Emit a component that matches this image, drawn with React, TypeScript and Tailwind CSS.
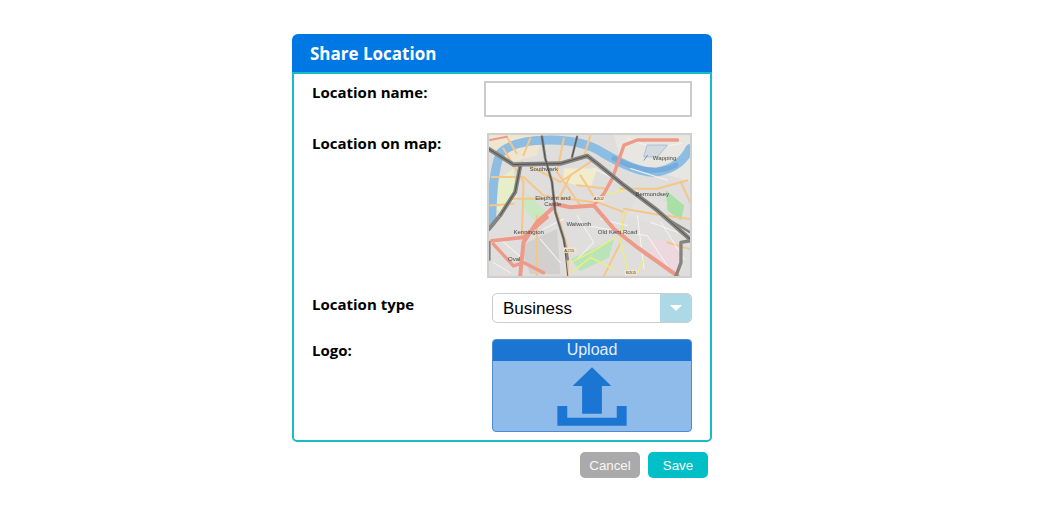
function MapPicture() {
  return (
    <svg viewBox="27 30 600 420" className="block h-full w-full" preserveAspectRatio="none">
      <defs>
        <filter id="soft" x="0" y="0" width="100%" height="100%">
          <feGaussianBlur stdDeviation="1.6" />
        </filter>
      </defs>
      <g filter="url(#soft)" fill="none" strokeLinecap="round" strokeLinejoin="round">
        <rect x="27" y="30" width="600" height="420" fill="#dfdedc" />
        <path d="M27 30H190L170 90 100 110 27 70Z" fill="#efe6d2" />
        <path d="M400 30H627V170L500 130 420 110Z" fill="#e8e6e0" />
        <path d="M45 170 100 130 110 220 60 260 45 250Z" fill="#e6efc8" />
        <path d="M555 195 610 240 600 285 560 255Z" fill="#a9e0a6" />
        <path d="M270 400 400 340 385 395 300 435Z" fill="#b9e4b8" />
        <path d="M140 205 195 255 170 295 125 240Z" fill="#c9e8c2" />
        <path d="M500 340 600 350 590 440 510 400Z" fill="#ecd8de" />
        <path d="M120 360 230 310 240 445 150 445Z" fill="#d2d0ce" />
        <path d="M250 130 350 130 330 190 250 170Z" fill="#f1eccb" />
        <path d="M470 210 560 230 530 300 440 270Z" fill="#e3e1de" />
        <path d="M34 290C38 200 40 140 60 85 90 55 140 45 210 45 270 45 330 58 370 85 430 120 490 145 530 140 580 130 610 105 627 70" stroke="#8dbde2" strokeWidth="27" />
        <path d="M400 100C470 135 530 148 585 120" stroke="#74acdc" strokeWidth="15" />
        <g stroke="#f5c68a" strokeWidth="6">
          <path d="M70 70 130 170 125 340" />
          <path d="M250 40 230 140 300 240" />
          <path d="M300 150 350 230 430 260 420 350 370 450" />
          <path d="M35 155H130L190 210 340 230" />
          <path d="M125 110 240 170 330 110" />
          <path d="M430 250 520 265 627 280" />
          <path d="M420 190 530 190 620 165" />
          <path d="M230 260 262 370 262 450" />
          <path d="M90 220H190" />
          <path d="M270 150 240 210" />
          <path d="M330 30 310 95" />
          <path d="M80 35 110 85" />
          <path d="M150 40 130 90" />
          <path d="M170 270 170 450" />
          <path d="M30 240 100 235" />
          <path d="M560 350 627 370" />
          <path d="M600 170 627 230" />
          <path d="M290 180 380 190" />
        </g>
        <g stroke="#f4f4ee" strokeWidth="3">
          <path d="M320 300 500 330 560 420" />
          <path d="M470 270 490 430" />
          <path d="M180 340 240 410" />
          <path d="M340 130 420 170 470 200" />
          <path d="M540 290 610 400" />
          <path d="M60 340 130 400" />
          <path d="M290 270 340 350 290 400" />
          <path d="M360 280 440 300" />
          <path d="M510 290 590 320" />
          <path d="M440 40 520 70 600 55" />
          <path d="M450 130 560 165" />
          <path d="M190 310 250 280" />
          <path d="M40 410 90 440" />
        </g>
        <g stroke="#e9ee84" strokeWidth="4.500">
          <path d="M270 410 330 380 405 335" />
          <path d="M275 437 330 395" />
          <path d="M430 260 420 350 440 430" />
          <path d="M380 205 430 195" />
          <path d="M490 400 470 440" />
          <path d="M330 395 400 430" />
        </g>
        <g stroke="#ee9a88" strokeWidth="10">
          <path d="M590 45H470L430 60 395 160 370 205 345 232" />
          <path d="M220 235 270 245 340 240 400 310 470 365 590 450" strokeWidth="12" />
          <path d="M220 245 170 290 130 350 120 450" strokeWidth="12" />
          <path d="M35 345 130 335 200 275" strokeWidth="11" />
          <path d="M40 355 100 420 130 410 190 440" strokeWidth="10" />
          <path d="M30 45 80 35" strokeWidth="6" />
        </g>
        <g stroke="#85847f" strokeWidth="9">
          <path d="M27 72 100 118 240 115 320 92 350 115 430 180 530 255 627 340" strokeWidth="13" />
          <path d="M120 125 105 200 60 270 27 310" strokeWidth="12" />
          <path d="M185 35 195 100 215 170 225 260 250 340 262 400" strokeWidth="8" />
          <path d="M290 35 275 95" strokeWidth="7" />
          <path d="M627 345 600 350 600 410 585 450" strokeWidth="10" />
          <path d="M27 350 27 400" strokeWidth="10" />
          <path d="M560 280 627 320" strokeWidth="7" />
        </g>
        <g stroke="#47474a" strokeWidth="2.500">
          <path d="M27 72 100 118 240 115 320 92 350 115 430 180 530 255 627 340" />
          <path d="M185 35 195 100 215 170 225 260 250 340 262 450" />
          <path d="M120 125 105 200 60 270" />
          <path d="M290 35 275 95" />
        </g>
        <path d="M490 95 530 95 560 60 500 60Z" fill="#d3dadd" stroke="#93aede" strokeWidth="2" />
        <path d="M500 90 490 105" stroke="#4a6fc0" strokeWidth="2" />
        <rect x="338" y="212" width="34" height="17" fill="#f6e5c8" />
        <rect x="248" y="365" width="40" height="16" fill="#f6e5c8" />
        <rect x="432" y="432" width="36" height="16" fill="#f6e5c8" />
      </g>
      <g fontFamily="Liberation Sans, sans-serif" fontSize="18" fill="#444" filter="url(#soft)">
        <text x="148" y="137">Southwark</text>
        <text x="516" y="105">Wapping</text>
        <text x="464" y="212">Bermondsey</text>
        <text x="165" y="223">Elephant and</text>
        <text x="192" y="243">Castle</text>
        <text x="258" y="302">Walworth</text>
        <text x="352" y="326">Old Kent Road</text>
        <text x="100" y="324">Kennington</text>
        <text x="84" y="406">Oval</text>
        <text x="340" y="225" fontSize="13">A202</text>
        <text x="252" y="378" fontSize="13">A215</text>
        <text x="436" y="445" fontSize="13">B205</text>
      </g>
    </svg>
  );
}

function Label({ children }: { children: string }) {
  return (
    <div className="w-[172px] shrink-0 text-[15px] font-bold leading-5 text-black [font-family:'Open_Sans',sans-serif]">
      {children}
    </div>
  );
}

export default function App() {
  return (
    <div className="min-h-[515px] bg-white pl-[292px] pt-[34px] [font-family:'Liberation_Sans',sans-serif]">
      <div className="w-[420px]">
        <div className="flex h-[38px] items-center rounded-t-[6px] bg-[#0078e3] pl-[18px] pt-[2px] text-[17px] font-bold text-white [font-family:'Open_Sans',sans-serif]">
          Share Location
        </div>
        <div className="rounded-b-[5px] border-2 border-[#17bcc6] pb-[8px] pl-[18px] pr-[18px] pt-[7px]">
          <div className="flex">
            <div className="pt-px"><Label>Location name:</Label></div>
            <div className="h-[36px] w-[208px] border-2 border-[#cccccc] bg-white" />
          </div>
          <div className="mt-[16px] flex">
            <Label>Location on map:</Label>
            <div className="ml-[3px] h-[145px] w-[205px] overflow-hidden border-[2px] border-[#cfcfcf]">
              <MapPicture />
            </div>
          </div>
          <div className="mt-[15px] flex">
            <div className="pt-px"><Label>Location type</Label></div>
            <div className="ml-[8px] flex h-[30px] w-[200px] items-center overflow-hidden rounded-[5px] border border-[#cccccc] bg-white">
              <span className="flex-1 pl-[10px] pt-[2px] text-[17px] text-black">Business</span>
              <div className="flex h-full w-[31px] items-center justify-center bg-[#add8e6]">
                <div className="h-0 w-0 border-x-[6px] border-t-[6px] border-x-transparent border-t-white" />
              </div>
            </div>
          </div>
          <div className="mt-[16px] flex">
            <div className="pt-px"><Label>Logo:</Label></div>
            <div className="ml-[8px] h-[93px] w-[200px] overflow-hidden rounded-[4px] border border-[#4d8ccf] bg-[#8fbbea]">
              <div className="h-[21px] bg-[#1a76d2] text-center text-[16px] leading-[20px] text-[#e4edf8]">Upload</div>
              <svg viewBox="0 0 200 71" className="block h-[71px] w-[198px]">
                <path d="M100 6 119.500 25H110V53H90V25H80.500Z" fill="#1a76d2" />
                <path d="M65 45H75V57H125V45H135V65H65Z" fill="#1a76d2" />
              </svg>
            </div>
          </div>
        </div>
        <div className="mt-[10px] flex justify-end gap-2 pr-[4px]">
          <button className="h-[26px] w-[60px] rounded-[5px] bg-[#aaaaaa] pt-[2px] text-[13.33px] text-[#f7f7f7]">Cancel</button>
          <button className="h-[26px] w-[60px] rounded-[5px] bg-[#00bfc7] pt-[2px] text-[13.33px] text-white">Save</button>
        </div>
      </div>
    </div>
  );
}
